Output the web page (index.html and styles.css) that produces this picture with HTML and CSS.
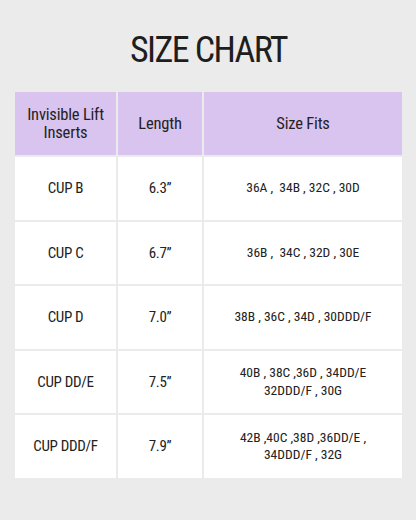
FILE: index.html
```html
<!DOCTYPE html>
<html>
<head>
<meta charset="utf-8">
<link rel="stylesheet" href="styles.css">
</head>
<body>
<main class="page">
  <h1 class="title">SIZE CHART</h1>
  <div class="chart">
    <div class="cell head">Invisible Lift<br>Inserts</div>
    <div class="cell head">Length</div>
    <div class="cell head">Size Fits</div>

    <div class="cell">CUP B</div>
    <div class="cell">6.3”</div>
    <div class="cell fits">36A ,&nbsp; 34B , 32C , 30D</div>

    <div class="cell">CUP C</div>
    <div class="cell">6.7”</div>
    <div class="cell fits">36B ,&nbsp; 34C , 32D , 30E</div>

    <div class="cell">CUP D</div>
    <div class="cell">7.0”</div>
    <div class="cell fits">38B , 36C , 34D , 30DDD/F</div>

    <div class="cell">CUP DD/E</div>
    <div class="cell">7.5”</div>
    <div class="cell fits">40B , 38C ,36D , 34DD/E<br>32DDD/F , 30G</div>

    <div class="cell">CUP DDD/F</div>
    <div class="cell">7.9”</div>
    <div class="cell fits">42B ,40C ,38D ,36DD/E ,<br>34DDD/F , 32G</div>
  </div>
</main>
</body>
</html>
```

FILE: styles.css
```css
html, body {
  margin: 0;
  padding: 0;
  background: #ebebeb;
}

.page {
  width: 416px;
  height: 520px;
  box-sizing: border-box;
  padding: 30px 14px 0 15px;
  font-family: "Roboto Condensed", "DejaVu Sans Condensed", Roboto, sans-serif;
  font-stretch: condensed;
  color: #222222;
}

.title {
  margin: 0;
  height: 40px;
  line-height: 40px;
  text-align: center;
  font-size: 36px;
  font-weight: 400;
  letter-spacing: -1.6px;
  color: #1e1e1e;
}

.chart {
  margin-top: 22px;
  display: grid;
  grid-template-columns: 101px 84px 198px;
  grid-template-rows: 63px repeat(5, 62.5px);
  gap: 2px;
}

.cell {
  background: #ffffff;
  display: flex;
  align-items: center;
  justify-content: center;
  text-align: center;
  font-size: 15px;
  line-height: 18px;
  letter-spacing: -0.3px;
}

.cell.head {
  background: #d9c3ef;
  font-size: 16.5px;
  line-height: 17.5px;
  letter-spacing: -0.2px;
}

.cell.fits {
  font-size: 13.5px;
  line-height: 17.7px;
  letter-spacing: 0;
}
```
